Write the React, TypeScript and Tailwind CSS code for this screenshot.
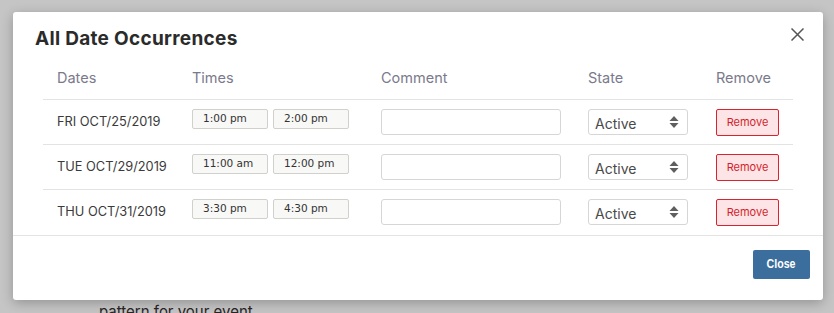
import React from 'react';

const ROWS = [
  { date: 'FRI OCT/25/2019', start: '1:00 pm', end: '2:00 pm' },
  { date: 'TUE OCT/29/2019', start: '11:00 am', end: '12:00 pm' },
  { date: 'THU OCT/31/2019', start: '3:30 pm', end: '4:30 pm' },
];

const grid = 'grid grid-cols-[135px_189px_207px_128px_1fr] pl-[14px]';

const SortArrows = () => (
  <svg width="10" height="14" viewBox="0 0 10 14" className="text-[#5f5f5f]">
    <path d="M5 1 L9.5 6 H0.5 Z" fill="currentColor" />
    <path d="M5 13 L9.5 8 H0.5 Z" fill="currentColor" />
  </svg>
);

export default function App() {
  return (
    <div className="relative w-[834px] h-[313px] overflow-hidden bg-[#c5c5c5] font-['Inter',sans-serif]">
      {/* page behind the backdrop */}
      <div className="pt-[302px] pl-[99px] text-[15px] leading-[20px] text-[#2a2424]">
        pattern for your event
      </div>

      {/* modal */}
      <div className="absolute left-[13px] top-[12px] w-[810px] h-[288px] bg-white rounded-[3px] shadow-[0_3px_12px_rgba(0,0,0,0.25)]">
        <div className="relative h-[45px] pt-[15px] pl-[22px]">
          <h2 className="text-[19px] leading-[24px] font-bold text-[#2b2b2b] tracking-[0.3px]">All Date Occurrences</h2>
          <button className="absolute top-[16px] right-[19px] w-[13px] h-[13px]">
            <svg width="13" height="13" viewBox="0 0 13 13">
              <path d="M0.5 0.5 L12.5 12.5 M12.5 0.5 L0.5 12.5" stroke="#555" strokeWidth="1.5" />
            </svg>
          </button>
        </div>

        <div className="mx-[30px]">
          <div className={`${grid} h-[43px] items-center border-b border-[#e3e3e3] text-[14.5px] text-[#7a7a8c]`}>
            <div>Dates</div>
            <div>Times</div>
            <div>Comment</div>
            <div>State</div>
            <div>Remove</div>
          </div>

          {ROWS.map((r, i) => (
            <div
              key={r.date}
              className={`${grid} h-[45px] pt-[9px] items-start ${i < ROWS.length - 1 ? 'border-b border-[#e3e3e3]' : ''}`}
            >
              <div className="h-[26px] flex items-center text-[12.8px] text-[#3a3a3a]">{r.date}</div>
              <div className="flex gap-[5px]">
                <div className="w-[76px] h-[20px] flex items-center pl-[10px] bg-[#f8f8f6] border border-[#d0d0cc] rounded-[2px] font-['DejaVu_Sans',sans-serif] text-[10.5px] text-[#333]">
                  {r.start}
                </div>
                <div className="w-[76px] h-[20px] flex items-center pl-[10px] bg-[#f8f8f6] border border-[#d0d0cc] rounded-[2px] font-['DejaVu_Sans',sans-serif] text-[10.5px] text-[#333]">
                  {r.end}
                </div>
              </div>
              <div>
                <div className="w-[180px] h-[26px] border border-[#d6d6d6] rounded-[3px] bg-white" />
              </div>
              <div>
                <div className="w-[100px] h-[26px] flex items-center justify-between pl-[6px] pr-[8px] border border-[#d6d6d6] rounded-[3px] bg-white text-[14px] text-[#4a4a4a]">
                  <span className="mt-[2px]">Active</span>
                  <SortArrows />
                </div>
              </div>
              <div>
                <button className="w-[63px] h-[27px] flex items-center justify-center bg-[#fde4e6] border border-[#d9232e] rounded-[2px] text-[11px] text-[#d41f2b]">
                  Remove
                </button>
              </div>
            </div>
          ))}
        </div>

        <div className="border-t border-[#e3e3e3] h-[64px] flex justify-end items-start pt-[14px] pr-[13px]">
          <button className="w-[57px] h-[29px] flex items-center justify-center bg-[#3b6e9c] rounded-[2px] text-white text-[12.5px] font-bold font-['Liberation_Sans',sans-serif]">
            <span className="inline-block scale-x-[0.85]">Close</span>
          </button>
        </div>
      </div>
    </div>
  );
}
